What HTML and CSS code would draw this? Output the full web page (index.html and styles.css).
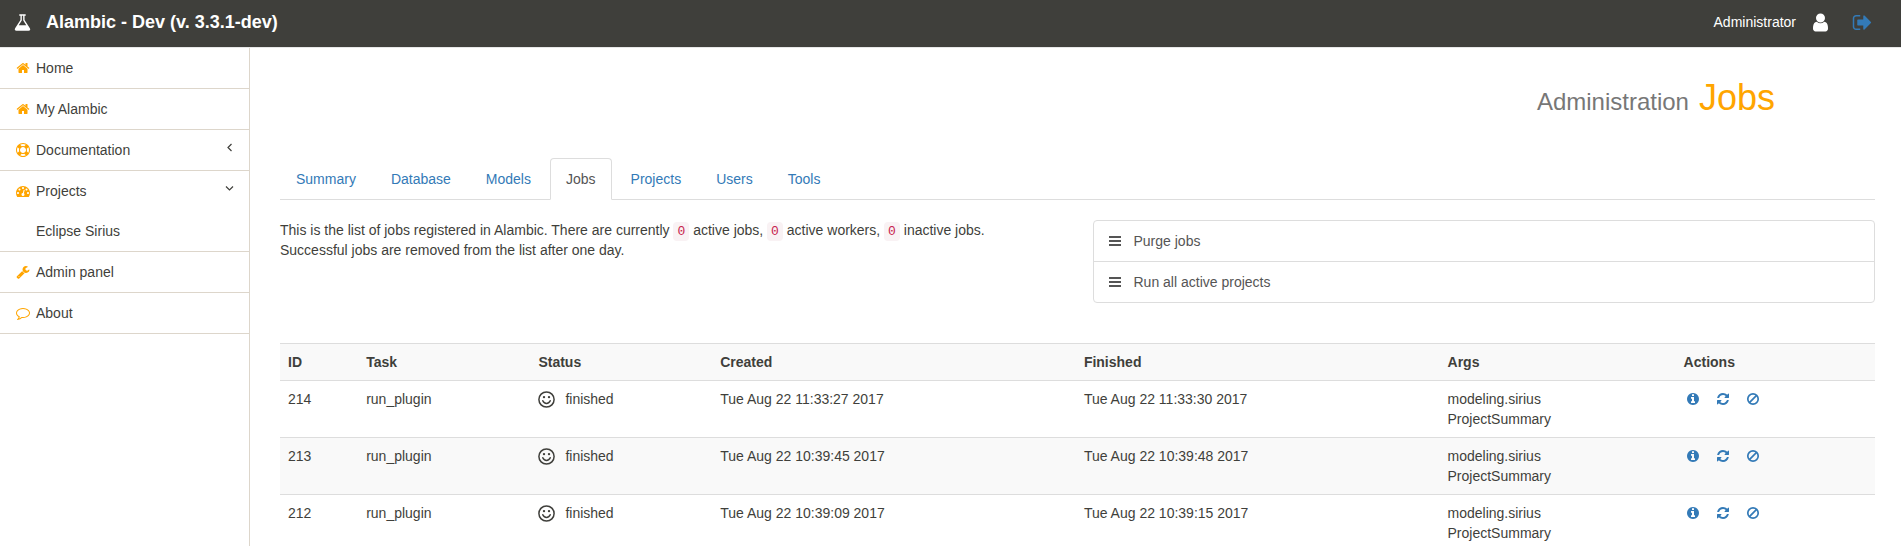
FILE: index.html
```html
<!DOCTYPE html>
<html lang="en">
<head>
<meta charset="utf-8">
<title>Alambic - Jobs</title>
<link rel="stylesheet" href="styles.css">
</head>
<body>
<svg class="sprite" aria-hidden="true">
  <symbol id="flask" viewBox="0 0 1792 1792"><path d="M1591 1448q56 89 21.5 152.5t-140.5 63.5h-1152q-106 0-140.5-63.5t21.5-152.5l503-793v-399h-64q-26 0-45-19t-19-45 19-45 45-19h512q26 0 45 19t19 45-19 45-45 19h-64v399zm-779-725l-272 429h712l-272-429-20-31v-436h-128v436z"/></symbol>
  <symbol id="user" viewBox="0 0 1792 1792"><path d="M1536 1399q0 109-62.5 187t-150.5 78h-854q-88 0-150.5-78t-62.5-187q0-85 8.5-160.5t31.5-152 58.5-131 94-89 134.5-34.5q131 128 313 128t313-128q76 0 134.5 34.5t94 89 58.5 131 31.5 152 8.5 160.5zm-256-887q0 159-112.5 271.5t-271.5 112.5-271.5-112.5-112.5-271.5 112.5-271.5 271.5-112.5 271.5 112.5 112.5 271.5z"/></symbol>
  <symbol id="sign-out" viewBox="0 0 1792 1792"><path d="M704 1440q0 4 1 20t.5 26.5-3 23.5-10 19.5-20.5 6.5h-320q-119 0-203.5-84.5t-84.5-203.5v-704q0-119 84.5-203.5t203.5-84.5h320q13 0 22.5 9.5t9.5 22.5q0 4 1 20t.5 26.5-3 23.5-10 19.5-20.5 6.5h-320q-66 0-113 47t-47 113v704q0 66 47 113t113 47h312l11.5 1 11.5 3 8 5.5 7 9 2 13.5zm928-544q0 26-19 45l-544 544q-19 19-45 19t-45-19-19-45v-288h-448q-26 0-45-19t-19-45v-384q0-26 19-45t45-19h448v-288q0-26 19-45t45-19 45 19l544 544q19 19 19 45z"/></symbol>
  <symbol id="home" viewBox="0 0 1792 1792"><path d="M1472 992v480q0 26-19 45t-45 19h-384v-384h-256v384h-384q-26 0-45-19t-19-45v-480q0-1 .5-3t.5-3l575-474 575 474q1 2 1 6zm223-69l-62 74q-8 9-21 11h-3q-13 0-21-7l-692-577-692 577q-12 8-24 7-13-2-21-11l-62-74q-8-10-7-23.5t11-21.5l719-599q32-26 76-26t76 26l244 204v-195q0-14 9-23t23-9h192q14 0 23 9t9 23v408l219 182q10 8 11 21.5t-7 23.5z"/></symbol>
  <symbol id="ring" viewBox="0 0 1792 1792"><path d="M896 0q182 0 348 71t286 191 191 286 71 348-71 348-191 286-286 191-348 71-348-71-286-191-191-286-71-348 71-348 191-286 286-191 348-71zm0 128q-190 0-361 90l194 194q82-28 167-28t167 28l194-194q-171-90-361-90zm-678 1129l194-194q-28-82-28-167t28-167l-194-194q-90 171-90 361t90 361zm678 407q190 0 361-90l-194-194q-82 28-167 28t-167-28l-194 194q171 90 361 90zm0-384q159 0 271.5-112.5t112.5-271.5-112.5-271.5-271.5-112.5-271.5 112.5-112.5 271.5 112.5 271.5 271.5 112.5zm484-217l194 194q90-171 90-361t-90-361l-194 194q28 82 28 167t-28 167z"/></symbol>
  <symbol id="gauge" viewBox="0 0 1792 1792"><path d="M384 1152q0-53-37.5-90.5t-90.5-37.5-90.5 37.5-37.5 90.5 37.5 90.5 90.5 37.5 90.5-37.5 37.5-90.5zm192-448q0-53-37.5-90.5t-90.5-37.5-90.5 37.5-37.5 90.5 37.5 90.5 90.5 37.5 90.5-37.5 37.5-90.5zm428 481l101-382q6-26-7.5-48.5t-38.5-29.5-48 6.5-30 39.5l-101 382q-60 5-107 43.5t-63 98.5q-20 77 20 146t117 89 146-20 89-117q16-60-6-117t-72-91zm660-33q0-53-37.5-90.5t-90.5-37.5-90.5 37.5-37.5 90.5 37.5 90.5 90.5 37.5 90.5-37.5 37.5-90.5zm-640-640q0-53-37.5-90.5t-90.5-37.5-90.5 37.5-37.5 90.5 37.5 90.5 90.5 37.5 90.5-37.5 37.5-90.5zm448 192q0-53-37.5-90.5t-90.5-37.5-90.5 37.5-37.5 90.5 37.5 90.5 90.5 37.5 90.5-37.5 37.5-90.5zm320 448q0 261-141 483-19 29-54 29h-1402q-35 0-54-29-141-221-141-483 0-182 71-348t191-286 286-191 348-71 348 71 286 191 191 286 71 348z"/></symbol>
  <symbol id="wrench" viewBox="0 0 1792 1792"><path d="M448 1472q0-26-19-45t-45-19-45 19-19 45 19 45 45 19 45-19 19-45zm644-420l-682 682q-37 37-90 37-52 0-91-37l-106-108q-38-36-38-90 0-53 38-91l681-681q39 98 114.5 173.5t173.5 114.5zm634-435q0 39-23 106-47 134-164.5 217.5t-258.5 83.5q-185 0-316.5-131.5t-131.5-316.5 131.5-316.5 316.5-131.5q58 0 121.5 16.5t107.5 46.5q16 11 16 28t-16 28l-293 169v224l193 107q5-3 79-48.5t135.5-81 70.5-35.5q15 0 23.5 10t8.5 25z"/></symbol>
  <symbol id="comment" viewBox="0 0 1792 1792"><path d="M896 384q-204 0-381.5 69.5t-282 187.5-104.5 255q0 112 71.5 213.5t201.5 175.5l87 50-27 96q-24 91-70 172 152-63 275-171l43-38 57 6q69 8 130 8 204 0 381.5-69.5t282-187.5 104.5-255-104.5-255-282-187.5-381.5-69.5zm896 512q0 174-120 321.5t-326 233-450 85.5q-70 0-145-8-198 175-460 242-49 14-114 22h-5q-15 0-27-10.5t-16-27.5v-1q-3-4-.5-12t2-10 4.5-9.5l6-9 7-8.5 8-9q7-8 31-34.5t34.5-38 31-39.5 32.5-51 27-59 26-76q-157-89-247.5-220t-90.5-281q0-174 120-321.5t326-233 450-85.5 450 85.5 326 233 120 321.5z"/></symbol>
  <symbol id="info" viewBox="0 0 1792 1792"><path d="M1152 1376v-160q0-14-9-23t-23-9h-96v-512q0-14-9-23t-23-9h-320q-14 0-23 9t-9 23v160q0 14 9 23t23 9h96v320h-96q-14 0-23 9t-9 23v160q0 14 9 23t23 9h448q14 0 23-9t9-23zm-128-896v-160q0-14-9-23t-23-9h-192q-14 0-23 9t-9 23v160q0 14 9 23t23 9h192q14 0 23-9t9-23zm640 416q0 209-103 385.5t-279.5 279.5-385.5 103-385.5-103-279.5-279.5-103-385.5 103-385.5 279.5-279.5 385.5-103 385.5 103 279.5 279.5 103 385.5z"/></symbol>
  <symbol id="refresh" viewBox="0 0 1792 1792"><path d="M1639 1056q0 5-1 7-64 268-268 434.5t-478 166.5q-146 0-282.5-55t-243.5-157l-129 129q-19 19-45 19t-45-19-19-45v-448q0-26 19-45t45-19h448q26 0 45 19t19 45-19 45l-137 137q71 66 161 102t187 36q134 0 250-65t186-179q11-17 53-117 8-23 30-23h192q13 0 22.5 9.5t9.5 22.5zm25-800v448q0 26-19 45t-45 19h-448q-26 0-45-19t-19-45 19-45l138-138q-148-137-349-137-134 0-250 65t-186 179q-11 17-53 117-8 23-30 23h-199q-13 0-22.5-9.5t-9.5-22.5v-7q65-268 270-434.5t480-166.5q146 0 284 55.5t245 156.5l130-129q19-19 45-19t45 19 19 45z"/></symbol>
  <symbol id="ban" viewBox="0 0 14 14"><g fill="none" stroke="currentColor" stroke-width="1.7"><circle cx="7" cy="7" r="5.2"/><path d="M3.4 10.6L10.6 3.4"/></g></symbol>
  <symbol id="bars" viewBox="0 0 12 12"><path d="M0 1h12v2H0zM0 5h12v2H0zM0 9h12v2H0z"/></symbol>
  <symbol id="smile" viewBox="0 0 17 17"><g fill="none" stroke="currentColor" stroke-width="1.5"><circle cx="8.5" cy="8.5" r="7.6"/><path d="M4.8 9.8Q5.8 12.4 8.5 12.4T12.2 9.8" stroke-linecap="round"/></g><circle cx="6" cy="6.1" r="1.2"/><circle cx="11" cy="6.1" r="1.2"/></symbol>
  <symbol id="angle-left" viewBox="0 0 9 9"><path d="M6.5 1L3 4.5 6.5 8" fill="none" stroke="currentColor" stroke-width="1.2"/></symbol>
  <symbol id="angle-down" viewBox="0 0 9 9"><path d="M1 2.5L4.5 6 8 2.5" fill="none" stroke="currentColor" stroke-width="1.2"/></symbol>
</svg>

<header class="topbar">
  <a class="brand" href="#"><svg class="icon-flask"><use href="#flask"/></svg>Alambic - Dev (v. 3.3.1-dev)</a>
  <div class="account">
    <span>Administrator</span>
    <a class="account-link" href="#" aria-label="Profile"><svg class="icon-lg"><use href="#user"/></svg></a>
    <a class="logout" href="#" aria-label="Log out"><svg class="icon-lg"><use href="#sign-out"/></svg></a>
  </div>
</header>

<div class="layout">
  <nav class="sidebar">
    <ul class="menu">
      <li><a href="#"><svg class="icon menu-icon"><use href="#home"/></svg>Home</a></li>
      <li><a href="#"><svg class="icon menu-icon"><use href="#home"/></svg>My Alambic</a></li>
      <li><a href="#"><svg class="icon menu-icon"><use href="#ring"/></svg>Documentation<svg class="arrow"><use href="#angle-left"/></svg></a></li>
      <li>
        <a href="#"><svg class="icon menu-icon"><use href="#gauge"/></svg>Projects<svg class="arrow"><use href="#angle-down"/></svg></a>
        <ul class="submenu"><li><a href="#">Eclipse Sirius</a></li></ul>
      </li>
      <li><a href="#"><svg class="icon menu-icon"><use href="#wrench"/></svg>Admin panel</a></li>
      <li><a href="#"><svg class="icon menu-icon"><use href="#comment"/></svg>About</a></li>
    </ul>
  </nav>

  <main class="content">
    <h1 class="page-title"><small>Administration</small> Jobs</h1>

    <nav class="tabs">
      <a href="#">Summary</a>
      <a href="#">Database</a>
      <a href="#">Models</a>
      <a class="active" href="#">Jobs</a>
      <a href="#">Projects</a>
      <a href="#">Users</a>
      <a href="#">Tools</a>
    </nav>

    <div class="intro">
      <p>This is the list of jobs registered in Alambic. There are currently <code>0</code> active jobs, <code>0</code> active workers, <code>0</code> inactive jobs.<br>Successful jobs are removed from the list after one day.</p>
      <div class="actions-list">
        <a href="#"><svg class="icon-bars"><use href="#bars"/></svg>Purge jobs</a>
        <a href="#"><svg class="icon-bars"><use href="#bars"/></svg>Run all active projects</a>
      </div>
    </div>

    <table class="jobs">
      <colgroup><col class="c-id"><col class="c-task"><col class="c-status"><col class="c-date"><col class="c-date"><col class="c-args"><col></colgroup>
      <thead>
        <tr><th>ID</th><th>Task</th><th>Status</th><th>Created</th><th>Finished</th><th>Args</th><th>Actions</th></tr>
      </thead>
      <tbody>
        <tr>
          <td>214</td><td>run_plugin</td>
          <td><span class="status"><svg class="icon-smile"><use href="#smile"/></svg>finished</span></td>
          <td>Tue Aug 22 11:33:27 2017</td><td>Tue Aug 22 11:33:30 2017</td>
          <td>modeling.sirius<br>ProjectSummary</td>
          <td><span class="row-actions"><a href="#" aria-label="Info"><svg class="icon"><use href="#info"/></svg></a><a href="#" aria-label="Run again"><svg class="icon"><use href="#refresh"/></svg></a><a href="#" aria-label="Delete"><svg class="icon"><use href="#ban"/></svg></a></span></td>
        </tr>
        <tr>
          <td>213</td><td>run_plugin</td>
          <td><span class="status"><svg class="icon-smile"><use href="#smile"/></svg>finished</span></td>
          <td>Tue Aug 22 10:39:45 2017</td><td>Tue Aug 22 10:39:48 2017</td>
          <td>modeling.sirius<br>ProjectSummary</td>
          <td><span class="row-actions"><a href="#" aria-label="Info"><svg class="icon"><use href="#info"/></svg></a><a href="#" aria-label="Run again"><svg class="icon"><use href="#refresh"/></svg></a><a href="#" aria-label="Delete"><svg class="icon"><use href="#ban"/></svg></a></span></td>
        </tr>
        <tr>
          <td>212</td><td>run_plugin</td>
          <td><span class="status"><svg class="icon-smile"><use href="#smile"/></svg>finished</span></td>
          <td>Tue Aug 22 10:39:09 2017</td><td>Tue Aug 22 10:39:15 2017</td>
          <td>modeling.sirius<br>ProjectSummary</td>
          <td><span class="row-actions"><a href="#" aria-label="Info"><svg class="icon"><use href="#info"/></svg></a><a href="#" aria-label="Run again"><svg class="icon"><use href="#refresh"/></svg></a><a href="#" aria-label="Delete"><svg class="icon"><use href="#ban"/></svg></a></span></td>
        </tr>
      </tbody>
    </table>
  </main>
</div>
</body>
</html>
```
FILE: styles.css
```css
* { box-sizing: border-box; }

body {
  margin: 0;
  background: #fff;
  color: #3f3f3b;
  font: 14px/20px "Liberation Sans", Arial, sans-serif;
}

a { color: #337ab7; text-decoration: none; }
ul { margin: 0; padding: 0; list-style: none; }
svg { display: block; flex: none; fill: currentColor; }

.sprite { display: none; }
.icon { width: 14px; height: 14px; }
.icon-lg { width: 21px; height: 21px; }
.icon-flask { width: 19px; height: 19px; }
.icon-bars { width: 12px; height: 12px; }
.icon-smile { width: 17px; height: 17px; }

.topbar {
  display: flex;
  justify-content: space-between;
  align-items: center;
  padding: 10px 28px 13px 13px;
  border-bottom: 1px solid #e7e7e7;
  background: #3f3f3b;
  background-clip: padding-box;
  color: #fff;
}
.brand {
  display: flex;
  align-items: center;
  gap: 14px;
  color: #fff;
  font-size: 18px;
  line-height: 24px;
  font-weight: bold;
}
.account { display: flex; align-items: center; }
.account-link { margin-left: 14px; color: #fff; }
.logout { margin-left: 21px; }

.layout { display: flex; min-height: calc(100vh - 48px); }

.sidebar {
  flex: none;
  width: 250px;
  border-right: 1px solid #ddd6cb;
}
.menu > li { border-bottom: 1px solid #ddd6cb; }
.menu a {
  display: flex;
  align-items: center;
  gap: 4px;
  padding: 10px 15px 10px 14px;
  color: #3f3f3b;
}
.menu-icon { margin: 0 2px; color: #ffa500; }
.menu .submenu a { padding-left: 36px; }
.arrow { width: 9px; height: 9px; margin: 0 0 5px auto; }

.content { flex: 1; min-width: 0; padding: 30px 26px 0 30px; }

.page-title {
  margin: 0 0 40px;
  padding-right: 100px;
  color: #ffa500;
  font-size: 36px;
  line-height: 40px;
  font-weight: normal;
  text-align: right;
}
.page-title small { color: #777; font-size: 24px; line-height: 24px; }

.tabs { display: flex; gap: 3px; border-bottom: 1px solid #ddd; }
.tabs a {
  margin-bottom: -1px;
  padding: 10px 15px;
  border: 1px solid transparent;
  border-radius: 4px 4px 0 0;
}
.tabs .active {
  border-color: #ddd #ddd #fff;
  background: #fff;
  color: #555;
}

.intro {
  display: grid;
  grid-template-columns: 1fr 1fr;
  gap: 30px;
  margin: 20px 0 40px;
}
.intro p { margin: 0; }
code {
  padding: 2px 4px;
  border-radius: 4px;
  background: #f9f2f4;
  color: #c7254e;
  font: 13px "Liberation Mono", monospace;
}

.actions-list { border: 1px solid #ddd; border-radius: 4px; }
.actions-list a {
  display: flex;
  align-items: center;
  gap: 13px;
  padding: 10px 15px;
  color: #555;
}
.actions-list a + a { border-top: 1px solid #ddd; }

.jobs { width: 100%; table-layout: fixed; border-collapse: separate; border-spacing: 0; }
.jobs th, .jobs td {
  padding: 8px;
  border-top: 1px solid #ddd;
  text-align: left;
  vertical-align: top;
}
.jobs thead tr, .jobs tbody tr:nth-child(even) { background: #f9f9f9; }
.c-id { width: 4.9%; }
.c-task { width: 10.8%; }
.c-status { width: 11.4%; }
.c-date { width: 22.8%; }
.c-args { width: 14.8%; }

.status { display: flex; align-items: center; gap: 10px; }
.row-actions { display: flex; align-items: center; gap: 16px; height: 20px; padding-left: 2px; }
```
